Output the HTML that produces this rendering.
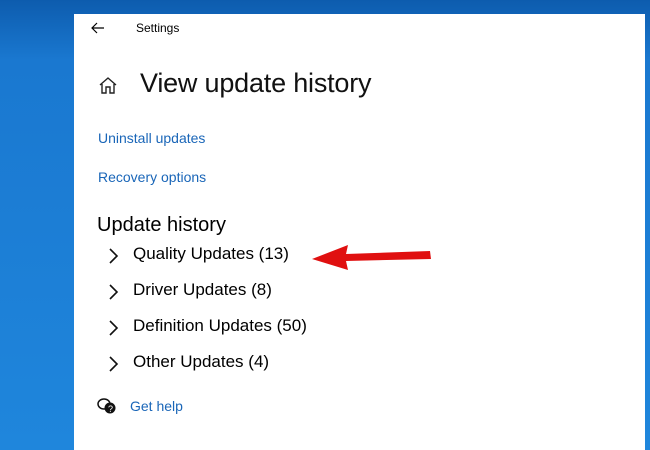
<!DOCTYPE html>
<html><head><style>
body{margin:0;width:650px;height:450px;overflow:hidden;position:relative;font-family:"Liberation Sans",sans-serif;
background:linear-gradient(180deg,#0d5cae 0px,#1a78d0 60px,#1f86dc 450px);}
.win{position:absolute;left:74px;top:14px;width:571px;height:436px;background:#fff;}
.t{position:absolute;white-space:nowrap;color:#000;}
.link{color:#1a66b8;font-size:14px;}
.item{font-size:17px;}
</style></head><body>
<div class="win">
<svg style="position:absolute;left:17px;top:8px" width="14" height="12" viewBox="0 0 14 12"><path d="M6 1L1 6L6 11M1 6H13" stroke="#000" stroke-width="1.2" fill="none"/></svg>
<div class="t" style="left:62px;top:7px;font-size:12px">Settings</div>
<svg style="position:absolute;left:24px;top:62px" width="20" height="19" viewBox="0 0 20 19"><path d="M2 9L10 2L18 9M4 8V17H8V11H12V17H16V8" stroke="#222" stroke-width="1.4" fill="none"/></svg>
<div class="t" style="left:66px;top:54px;font-size:27px;color:#111;letter-spacing:-0.2px">View update history</div>
<div class="t link" style="left:24px;top:116px">Uninstall updates</div>
<div class="t link" style="left:24px;top:155px">Recovery options</div>
<div class="t" style="left:23px;top:200px;font-size:20px">Update history</div>
<svg style="position:absolute;left:34px;top:233px" width="12" height="140" viewBox="0 0 12 140">
<g stroke="#111" stroke-width="1.6" fill="none">
<path d="M2 2L9 9L2 16"/><path d="M2 38L9 45L2 52"/><path d="M2 74L9 81L2 88"/><path d="M2 110L9 117L2 124"/></g></svg>
<div class="t item" style="left:59px;top:230px">Quality Updates (13)</div>
<div class="t item" style="left:59px;top:266px">Driver Updates (8)</div>
<div class="t item" style="left:59px;top:302px">Definition Updates (50)</div>
<div class="t item" style="left:59px;top:338px">Other Updates (4)</div>
<svg style="position:absolute;left:23px;top:384px" width="20" height="16" viewBox="0 0 20 16"><ellipse cx="7" cy="6" rx="6" ry="5" fill="none" stroke="#111" stroke-width="1.5"/><circle cx="13" cy="10" r="5.5" fill="#111"/><text x="11" y="14" font-size="9" fill="#fff" font-family="Liberation Sans">?</text></svg>
<div class="t link" style="left:56px;top:384px">Get help</div>
<svg style="position:absolute;left:236px;top:225px" width="124" height="32" viewBox="0 0 124 32"><path d="M2 20L38 6L36 15L120 12L121 20L36 22L38 31Z" fill="#e01010"/></svg>
</div>
</body></html>
